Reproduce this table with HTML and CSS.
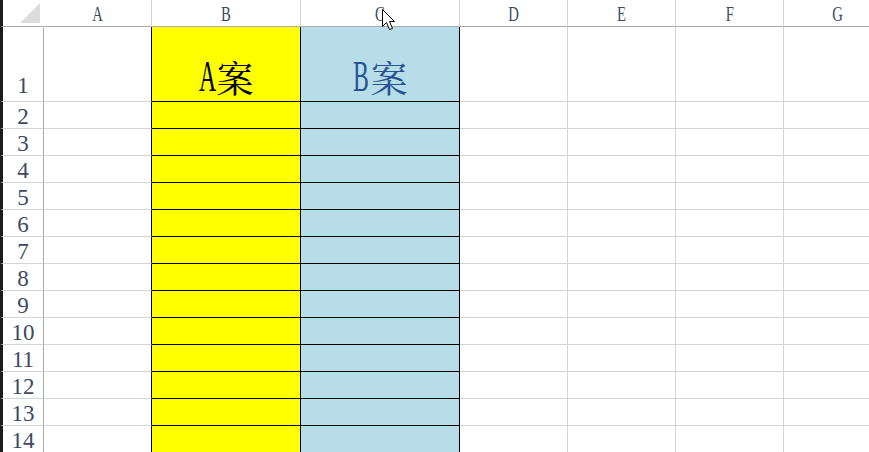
FILE: index.html
```html
<!DOCTYPE html>
<html>
<head>
<meta charset="utf-8">
<link rel="stylesheet" href="styles.css">
</head>
<body>
<div class="sheet">
  <div class="cell corner"><span class="tri"></span></div>
  <div class="cell colh"><span class="lt">A</span></div>
  <div class="cell colh"><span class="lt">B</span></div>
  <div class="cell colh"><span class="lt">C</span></div>
  <div class="cell colh"><span class="lt">D</span></div>
  <div class="cell colh"><span class="lt">E</span></div>
  <div class="cell colh"><span class="lt">F</span></div>
  <div class="cell colh"><span class="lt">G</span></div>

  <div class="cell rowh first">1</div>
  <div class="cell edge"></div>
  <div class="cell ya title"><span class="big">A</span>案</div>
  <div class="cell bl title blue"><span class="big">B</span>案</div>
  <div class="cell"></div><div class="cell"></div><div class="cell"></div><div class="cell"></div>

  <div class="cell rowh">2</div><div class="cell edge"></div><div class="cell ya"></div><div class="cell bl"></div><div class="cell"></div><div class="cell"></div><div class="cell"></div><div class="cell"></div>
  <div class="cell rowh">3</div><div class="cell edge"></div><div class="cell ya"></div><div class="cell bl"></div><div class="cell"></div><div class="cell"></div><div class="cell"></div><div class="cell"></div>
  <div class="cell rowh">4</div><div class="cell edge"></div><div class="cell ya"></div><div class="cell bl"></div><div class="cell"></div><div class="cell"></div><div class="cell"></div><div class="cell"></div>
  <div class="cell rowh">5</div><div class="cell edge"></div><div class="cell ya"></div><div class="cell bl"></div><div class="cell"></div><div class="cell"></div><div class="cell"></div><div class="cell"></div>
  <div class="cell rowh">6</div><div class="cell edge"></div><div class="cell ya"></div><div class="cell bl"></div><div class="cell"></div><div class="cell"></div><div class="cell"></div><div class="cell"></div>
  <div class="cell rowh">7</div><div class="cell edge"></div><div class="cell ya"></div><div class="cell bl"></div><div class="cell"></div><div class="cell"></div><div class="cell"></div><div class="cell"></div>
  <div class="cell rowh">8</div><div class="cell edge"></div><div class="cell ya"></div><div class="cell bl"></div><div class="cell"></div><div class="cell"></div><div class="cell"></div><div class="cell"></div>
  <div class="cell rowh">9</div><div class="cell edge"></div><div class="cell ya"></div><div class="cell bl"></div><div class="cell"></div><div class="cell"></div><div class="cell"></div><div class="cell"></div>
  <div class="cell rowh">10</div><div class="cell edge"></div><div class="cell ya"></div><div class="cell bl"></div><div class="cell"></div><div class="cell"></div><div class="cell"></div><div class="cell"></div>
  <div class="cell rowh">11</div><div class="cell edge"></div><div class="cell ya"></div><div class="cell bl"></div><div class="cell"></div><div class="cell"></div><div class="cell"></div><div class="cell"></div>
  <div class="cell rowh">12</div><div class="cell edge"></div><div class="cell ya"></div><div class="cell bl"></div><div class="cell"></div><div class="cell"></div><div class="cell"></div><div class="cell"></div>
  <div class="cell rowh">13</div><div class="cell edge"></div><div class="cell ya"></div><div class="cell bl"></div><div class="cell"></div><div class="cell"></div><div class="cell"></div><div class="cell"></div>
  <div class="cell rowh">14</div><div class="cell edge"></div><div class="cell ya"></div><div class="cell bl"></div><div class="cell"></div><div class="cell"></div><div class="cell"></div><div class="cell"></div>
</div>
<svg class="cursor" width="15" height="23" viewBox="0 0 15 23">
  <path d="M0.5 0.5 L0.5 17.5 L4.5 13.5 L7.5 20.5 L10.5 19.5 L7.5 12.5 L12.5 12.5 Z" fill="#fff" stroke="#000" stroke-width="1"/>
</svg>
</body>
</html>
```

FILE: styles.css
```css
html, body {
  margin: 0;
  padding: 0;
  background: #ffffff;
}
body {
  width: 869px;
  height: 452px;
  overflow: hidden;
  position: relative;
}
.sheet {
  display: grid;
  width: max-content;
  grid-template-columns: 44px 108px 149px 159px 108px 108px 108px 108px;
  grid-template-rows: 27px 75px repeat(13, 27px);
  font-family: "Liberation Serif", "Noto Serif CJK SC", "Noto Sans CJK SC", serif;
  color: #3d4a5f;
}
.cell {
  box-sizing: border-box;
  border-right: 1px solid #d4d4d4;
  border-bottom: 1px solid #d4d4d4;
  background: #ffffff;
}
.corner {
  position: relative;
  border-left: 3px solid #1c1c1c;
  border-right-color: #ffffff;
  border-bottom-color: #ababab;
}
.tri {
  position: absolute;
  left: 17px;
  top: 3px;
  width: 0;
  height: 0;
  border-left: 20px solid transparent;
  border-bottom: 20px solid #dcdcdc;
}
.colh {
  display: flex;
  justify-content: center;
  align-items: flex-end;
  border-bottom-color: #ababab;
  font-size: 21px;
  line-height: 1;
  padding-bottom: 1px;
}
.lt {
  display: inline-block;
  transform: scaleX(0.7);
}
.rowh {
  display: flex;
  justify-content: center;
  align-items: flex-end;
  border-left: 3px solid #1c1c1c;
  border-right-color: #ababab;
  font-size: 23px;
  line-height: 1;
  padding-bottom: 0;
}
.rowh.first {
  padding-bottom: 4px;
}
.edge {
  border-right-color: #000000;
}
.ya {
  background: #ffff00;
  border-right-color: #000000;
  border-bottom-color: #000000;
}
.bl {
  background: #b7dee8;
  border-right-color: #000000;
  border-bottom-color: #000000;
}
.title {
  display: flex;
  justify-content: center;
  align-items: flex-end;
  font-size: 37px;
  line-height: 1;
  color: #000000;
  padding-bottom: 2px;
}
.title.blue {
  color: #285391;
}
.big {
  display: inline-block;
  width: 18px;
  font-size: 44px;
  transform: scaleX(0.54);
  transform-origin: left bottom;
}
.cursor {
  position: absolute;
  left: 382px;
  top: 9px;
}
```
